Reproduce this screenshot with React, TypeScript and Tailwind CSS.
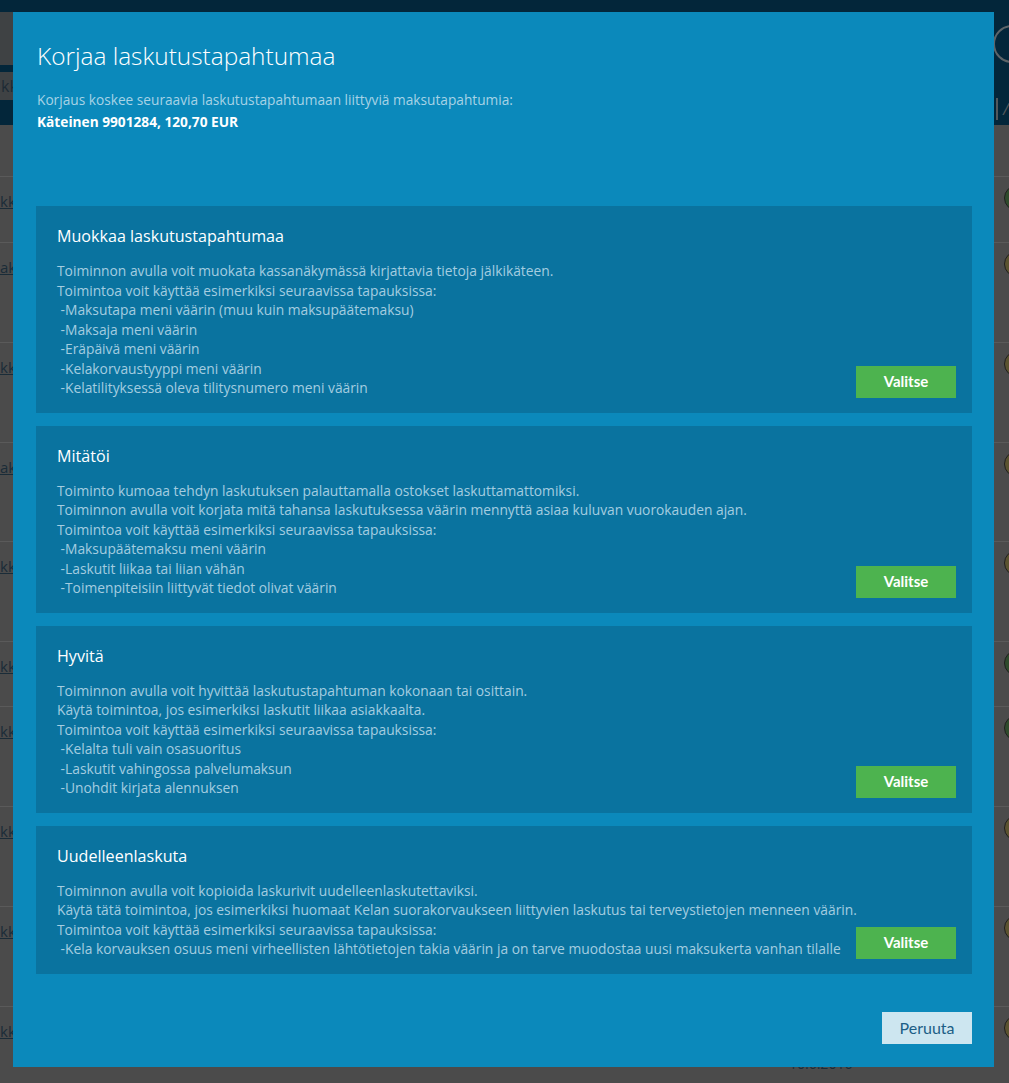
import React from "react";

const rows = [
  { h: 66, t: "kk", c: "g" },
  { h: 100, t: "ak", c: "o" },
  { h: 100, t: "kk", c: "o" },
  { h: 99, t: "ak", c: "o" },
  { h: 100, t: "kk", c: "o" },
  { h: 65, t: "kk", c: "g" },
  { h: 100, t: "kk", c: "g" },
  { h: 100, t: "kk", c: "o" },
  { h: 100, t: "kk", c: "o" },
  { h: 100, t: "kk", c: "o" },
];

const cards: { title: string; lines: string[] }[] = [
  {
    title: "Muokkaa laskutustapahtumaa",
    lines: [
      "Toiminnon avulla voit muokata kassanäkymässä kirjattavia tietoja jälkikäteen.",
      "Toimintoa voit käyttää esimerkiksi seuraavissa tapauksissa:",
      " -Maksutapa meni väärin (muu kuin maksupäätemaksu)",
      " -Maksaja meni väärin",
      " -Eräpäivä meni väärin",
      " -Kelakorvaustyyppi meni väärin",
      " -Kelatilityksessä oleva tilitysnumero meni väärin",
    ],
  },
  {
    title: "Mitätöi",
    lines: [
      "Toiminto kumoaa tehdyn laskutuksen palauttamalla ostokset laskuttamattomiksi.",
      "Toiminnon avulla voit korjata mitä tahansa laskutuksessa väärin mennyttä asiaa kuluvan vuorokauden ajan.",
      "Toimintoa voit käyttää esimerkiksi seuraavissa tapauksissa:",
      " -Maksupäätemaksu meni väärin",
      " -Laskutit liikaa tai liian vähän",
      " -Toimenpiteisiin liittyvät tiedot olivat väärin",
    ],
  },
  {
    title: "Hyvitä",
    lines: [
      "Toiminnon avulla voit hyvittää laskutustapahtuman kokonaan tai osittain.",
      "Käytä toimintoa, jos esimerkiksi laskutit liikaa asiakkaalta.",
      "Toimintoa voit käyttää esimerkiksi seuraavissa tapauksissa:",
      " -Kelalta tuli vain osasuoritus",
      " -Laskutit vahingossa palvelumaksun",
      " -Unohdit kirjata alennuksen",
    ],
  },
  {
    title: "Uudelleenlaskuta",
    lines: [
      "Toiminnon avulla voit kopioida laskurivit uudelleenlaskutettaviksi.",
      "Käytä tätä toimintoa, jos esimerkiksi huomaat Kelan suorakorvaukseen liittyvien laskutus tai terveystietojen menneen väärin.",
      "Toimintoa voit käyttää esimerkiksi seuraavissa tapauksissa:",
      " -Kela korvauksen osuus meni virheellisten lähtötietojen takia väärin ja on tarve muodostaa uusi maksukerta vanhan tilalle",
    ],
  },
];

export default function App() {
  return (
    <div className="relative w-[1009px] h-[1083px] overflow-hidden bg-[#4b4b4b] font-['Open_Sans',sans-serif]">
      {/* background page (dimmed) */}
      <div className="flex flex-col">
        <div className="h-[125px] bg-[#03263a] relative">
          <div className="absolute left-0 top-[12px] w-[300px] h-[53px] bg-[#3f4244]" />
          <div className="absolute left-0 top-[72px] w-[300px] h-[28px] bg-[#3f4244] flex items-center">
            <span className="text-[16px] text-[#1d2b35] pl-[1px]">kk</span>
          </div>
          <div className="absolute left-[993px] top-[25px] w-[38px] h-[38px] rounded-full border-2 border-[#5d6468]" />
          <div className="absolute left-[996px] top-[98px] h-[22px] w-[2px] bg-[#52585c]" />
          <div className="absolute left-[1003px] top-[98px] text-[16px] leading-[22px] text-[#52585c] italic">/</div>
        </div>
        <div className="h-[52px] border-b border-[#5a5a5a]" />
        {rows.map((r, i) => (
          <div
            key={i}
            className="relative border-b border-[#5a5a5a]"
            style={{ height: r.h }}
          >
            <span className="absolute left-0 top-[13px] text-[15px] text-[#1a2c38] underline">{r.t}</span>
            <div
              className={
                "absolute left-[1004px] top-[8px] w-[26px] h-[26px] rounded-full border border-[#1f1f1f] " +
                (r.c === "g" ? "bg-[#2f4b2c]" : "bg-[#5b5330]")
              }
            />
            {i === rows.length - 1 && (
              <span className="absolute left-[789px] top-[47px] text-[14px] leading-[20px] text-[#1a2c38]">10.6.2016</span>
            )}
          </div>
        ))}
      </div>

      {/* modal */}
      <div className="absolute left-[13px] top-[12px] w-[981px] h-[1055px] bg-[#0b89bb] flex flex-col pl-[23px] pr-[22px] pt-[28px] pb-[23px]">
        <h1 className="pl-[1px] text-[24.4px] leading-[31px] font-light text-white">Korjaa laskutustapahtumaa</h1>
        <div className="pl-[1px] mt-[18px] text-[13.7px] leading-[22px]">
          <div className="text-[#a7d3e6]">Korjaus koskee seuraavia laskutustapahtumaan liittyviä maksutapahtumia:</div>
          <div className="font-bold text-white">Käteinen 9901284, 120,70 EUR</div>
        </div>
        <div className="mt-[73px] flex flex-col gap-[13px]">
          {cards.map((c) => (
            <div key={c.title} className="bg-[#0a739f] pl-[21px] pr-[16px] pt-[18px] pb-[15px] flex items-end justify-between">
              <div className="flex flex-col min-w-0">
                <div className="text-[16.1px] leading-[24px] text-white">{c.title}</div>
                <div className="mt-[13px] text-[13.8px] leading-[19.5px] text-[#a4cde0]">
                  {c.lines.map((l, i) => (
                    <div key={i} className="whitespace-pre">{l}</div>
                  ))}
                </div>
              </div>
              <button className="w-[100px] h-[32px] shrink-0 bg-[#4db34f] text-white font-['Lato',sans-serif] font-bold text-[15px]">
                Valitse
              </button>
            </div>
          ))}
        </div>
        <div className="mt-auto flex justify-end">
          <button className="w-[90px] h-[32px] bg-[#cde6f0] text-[#1c5e86] font-['Lato',sans-serif] text-[16px]">
            Peruuta
          </button>
        </div>
      </div>
    </div>
  );
}
